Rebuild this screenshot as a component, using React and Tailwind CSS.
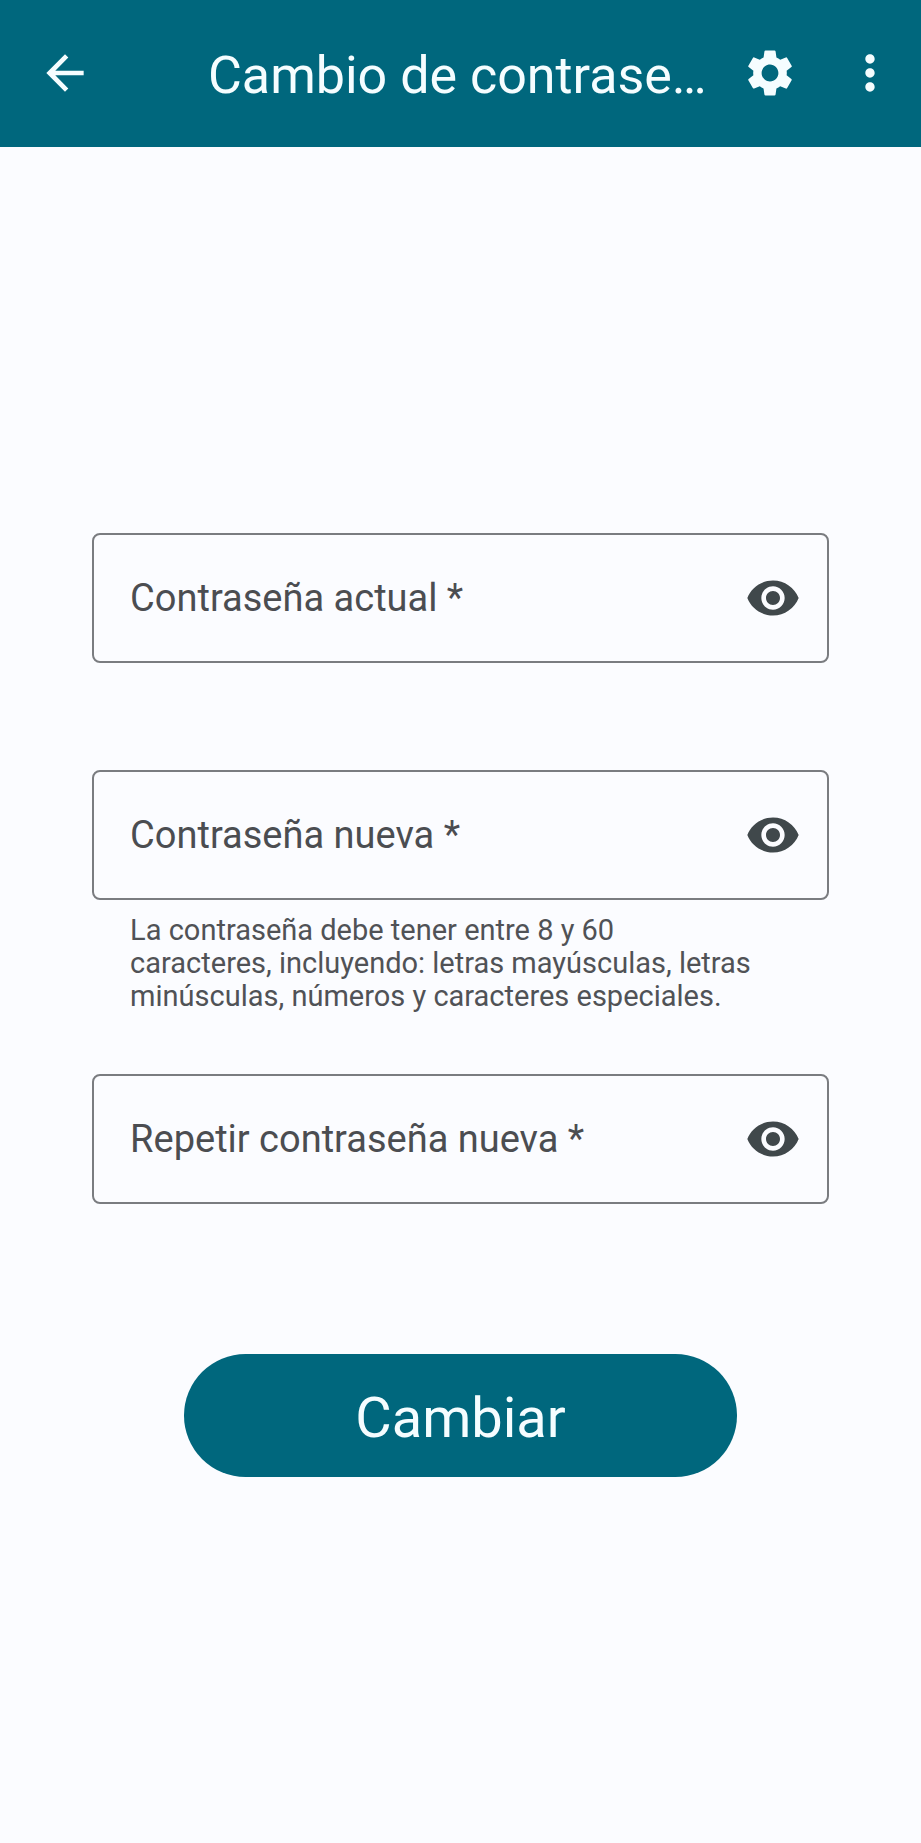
import { useState } from "react";
import { MdArrowBack, MdMoreVert, MdSettings, MdVisibility, MdVisibilityOff } from "react-icons/md";

function PasswordField({ id, label, helper }) {
  const [visible, setVisible] = useState(false);
  return (
    <div>
      <div className="relative flex h-[130px] items-center rounded-lg border-2 border-[#7a7c80] pl-9 pr-[26px]">
        <input
          id={id}
          type={visible ? "text" : "password"}
          placeholder=" "
          required
          aria-describedby={helper ? `${id}-helper` : undefined}
          className="peer h-full min-w-0 flex-1 bg-transparent text-[38px] text-[#44474a] outline-none"
        />
        <label
          htmlFor={id}
          className="pointer-events-none absolute inset-y-0 left-9 hidden items-center text-[38px] leading-[48px] text-[#4b4d51] peer-placeholder-shown:flex"
        >
          {label}
        </label>
        <button
          type="button"
          aria-label={visible ? "Ocultar contraseña" : "Mostrar contraseña"}
          onClick={() => setVisible(!visible)}
          className="shrink-0 text-[#40484b]"
        >
          {visible ? <MdVisibilityOff className="size-14" /> : <MdVisibility className="size-14" />}
        </button>
      </div>
      {helper && (
        <p id={`${id}-helper`} className="pl-[38px] pt-[14px] text-[29px] leading-[33px] text-[#505256]">
          {helper.map((line) => (
            <span key={line} className="block">{line}</span>
          ))}
        </p>
      )}
    </div>
  );
}

const passwordRules = [
  "La contraseña debe tener entre 8 y 60",
  "caracteres, incluyendo: letras mayúsculas, letras",
  "minúsculas, números y caracteres especiales.",
];

export default function App() {
  return (
    <div className="min-h-screen bg-[#fbfcff] font-[Roboto,sans-serif]">
      <header className="flex h-[147px] items-center bg-[#00677d] pb-[2px] pl-[37px] pr-[23px] text-[#f5fdff]">
        <button type="button" aria-label="Volver" className="shrink-0">
          <MdArrowBack className="size-14" />
        </button>
        <h1 className="ml-[115px] min-w-0 flex-1 truncate pt-[6px] text-[52px] leading-[64px]">Cambio de contraseña</h1>
        <button type="button" aria-label="Ajustes" className="ml-6 shrink-0">
          <MdSettings className="size-14" />
        </button>
        <button type="button" aria-label="Más opciones" className="ml-11 shrink-0">
          <MdMoreVert className="size-14" />
        </button>
      </header>
      <main className="px-[10%] pb-24 pt-[386px]">
        <form onSubmit={(e) => e.preventDefault()} className="flex flex-col">
          <PasswordField id="current" label="Contraseña actual *" />
          <div className="mt-[107px]">
            <PasswordField id="new" label="Contraseña nueva *" helper={passwordRules} />
          </div>
          <div className="mt-[61px]">
            <PasswordField id="repeat" label="Repetir contraseña nueva *" />
          </div>
          <button
            type="submit"
            className="mt-[150px] h-[123px] w-3/4 self-center rounded-full bg-[#00677d] pt-[5px] text-[56px] leading-[64px] text-[#f5fdff]"
          >
            Cambiar
          </button>
        </form>
      </main>
    </div>
  );
}
